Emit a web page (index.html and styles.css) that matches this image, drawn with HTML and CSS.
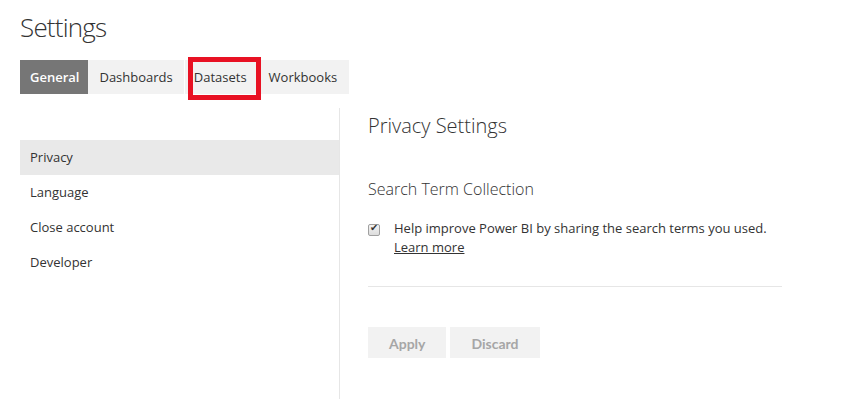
FILE: index.html
```html
<!DOCTYPE html>
<html lang="en">
<head>
    <meta charset="UTF-8">
    <meta name="viewport" content="width=device-width, initial-scale=1.0">
    <title>Settings</title>
    <link rel="stylesheet" href="styles.css">
</head>
<body>
    <div class="page">
        <h1 class="title">Settings</h1>
        <nav class="tabs">
            <a class="tab active" href="#">General</a>
            <a class="tab" href="#">Dashboards</a>
            <a class="tab marked" href="#">Datasets</a>
            <a class="tab wide" href="#">Workbooks</a>
        </nav>
        <div class="body">
            <ul class="side">
                <li class="selected">Privacy</li>
                <li>Language</li>
                <li>Close account</li>
                <li>Developer</li>
            </ul>
            <div class="main">
                <h2>Privacy Settings</h2>
                <h3>Search Term Collection</h3>
                <label class="check">
                    <input type="checkbox" checked>
                    <span>Help improve Power BI by sharing the search terms you used.<br><a href="#">Learn more</a></span>
                </label>
                <hr>
                <div class="buttons">
                    <button class="btn">Apply</button>
                    <button class="btn">Discard</button>
                </div>
            </div>
        </div>
    </div>
</body>
</html>
```

FILE: styles.css
```css
body { margin: 0; font-family: "Open Sans", sans-serif; color: #333; background: #fff; }
.page { padding: 0 20px; }
.title { font-weight: 300; font-size: 26px; letter-spacing: -0.8px; margin: 0; padding-top: 9px; height: 51px; color: #333; }
.tabs { display: flex; gap: 1px; }
.tab { display: block; height: 34px; line-height: 34px; padding: 0 11px; font-size: 13px; color: #333; text-decoration: none; background: #f2f2f2; }
.tab.active { background: #767676; color: #fff; font-weight: 600; padding: 0 9px 0 10px; margin-right: -1px; }
.tab.marked { position: relative; padding: 0 9px; }
.tab.marked::after { content: ""; position: absolute; left: 3px; top: -3px; width: 63px; height: 33px; border: 5px solid #e81123; }
.tab.wide { padding: 0 12px; }
.body { display: flex; margin-top: 14px; }
.side { list-style: none; margin: 32px 0 0; padding: 0; width: 319px; }
.side li { height: 35px; line-height: 34px; padding-left: 10px; font-size: 13px; color: #333; }
.side li.selected { background: #e9e9e9; }
.main { border-left: 1px solid #e6e6e6; padding-left: 28px; height: 300px; }
.main h2 { font-weight: 300; font-size: 20px; margin: 4px 0 0; color: #333; }
.main h3 { font-weight: 300; font-size: 16px; margin: 39px 0 0; color: #333; }
.check { display: flex; gap: 14px; margin-top: 19px; font-size: 13px; line-height: 19px; }
.check input { appearance: none; margin: 5px 0 0; width: 12px; height: 12px; border: 1px solid #a0a0a0; border-radius: 2px; background: linear-gradient(#f4f4f4, #dcdcdc); position: relative; flex: none; }
.check input:checked::after { content: "✔"; position: absolute; left: 1px; top: -3px; font-size: 10px; color: #333; }
.check a { color: #333; }
.main hr { width: 414px; border: 0; border-top: 1px solid #e6e6e6; margin: 29px 0 0; }
.buttons { display: flex; gap: 4px; margin-top: 40px; }
.btn { border: 0; background: #f2f2f2; color: #a6a6a6; font-family: Lato, sans-serif; font-weight: 700; font-size: 14px; height: 31px; padding: 2px 21px 0; }
```
